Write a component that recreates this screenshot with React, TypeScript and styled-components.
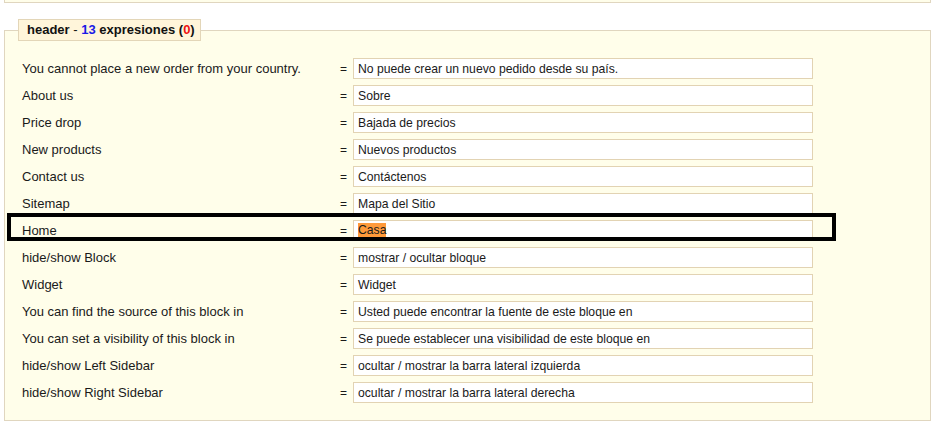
import React from 'react';
import styled, { createGlobalStyle } from 'styled-components';

const GlobalStyle = createGlobalStyle`
  html, body {
    margin: 0;
    padding: 0;
    background: #ffffff;
  }
  body {
    font-family: "Liberation Sans", Arial, sans-serif;
    font-size: 12px;
    color: #1a1a1a;
  }
`;

const Page = styled.div`
  width: 927px;
  padding: 0 0 0 4px;
`;

const TopPanel = styled.div`
  height: 2px;
  background: #fffeea;
  border: 1px solid #e0d6bf;
  border-top: none;
`;

const Group = styled.fieldset`
  position: relative;
  margin: 16px 0 0 0;
  padding: 14px 0 14px 17px;
  background: #fffeea;
  border: 1px solid #e0d6bf;
  min-width: 0;
`;

const Legend = styled.legend`
  margin-left: -4px;
  padding: 4px 5px 4px 8px;
  background: #fff5da;
  border: 1px solid #e3d6b8;
  font-weight: bold;
  font-size: 13px;
  line-height: 12px;
  color: #111;
`;

const Dash = styled.span`
  font-weight: normal;
`;

const Count = styled.span<{ $tone: 'blue' | 'red' }>`
  color: ${(p) => (p.$tone === 'blue' ? '#1a1ae6' : '#ee1111')};
`;

const Row = styled.div`
  display: grid;
  grid-template-columns: 318px 13px 460px;
  align-items: center;
  height: 27px;
`;

const Label = styled.span`
  white-space: nowrap;
  font-size: 13px;
`;

const Equals = styled.span`
  font-size: 12px;
`;

const Field = styled.div`
  box-sizing: border-box;
  height: 21px;
  padding: 0 4px;
  display: flex;
  align-items: center;
  background: #ffffff;
  border: 1px solid #e2d3b3;
  font-size: 12.2px;
  white-space: nowrap;
  overflow: hidden;
`;

const Marked = styled.span`
  background: #ff9a3a;
  line-height: 15px;
`;

const Highlight = styled.div`
  position: absolute;
  left: 2px;
  top: 172px;
  width: 821px;
  height: 20px;
  border: 4px solid #000;
  pointer-events: none;
`;

const rows: [string, string, boolean?][] = [
  ['You cannot place a new order from your country.', 'No puede crear un nuevo pedido desde su país.'],
  ['About us', 'Sobre'],
  ['Price drop', 'Bajada de precios'],
  ['New products', 'Nuevos productos'],
  ['Contact us', 'Contáctenos'],
  ['Sitemap', 'Mapa del Sitio'],
  ['Home', 'Casa', true],
  ['hide/show Block', 'mostrar / ocultar bloque'],
  ['Widget', 'Widget'],
  ['You can find the source of this block in', 'Usted puede encontrar la fuente de este bloque en'],
  ['You can set a visibility of this block in', 'Se puede establecer una visibilidad de este bloque en'],
  ['hide/show Left Sidebar', 'ocultar / mostrar la barra lateral izquierda'],
  ['hide/show Right Sidebar', 'ocultar / mostrar la barra lateral derecha'],
];

export default function App() {
  return (
    <Page>
      <GlobalStyle />
      <TopPanel />
      <Group>
        <Legend>
          header <Dash>-</Dash> <Count $tone="blue">13</Count> expresiones (<Count $tone="red">0</Count>)
        </Legend>
        {rows.map(([en, es, marked]) => (
          <Row key={en}>
            <Label>{en}</Label>
            <Equals>=</Equals>
            <Field>{marked ? <Marked>{es}</Marked> : es}</Field>
          </Row>
        ))}
        <Highlight />
      </Group>
    </Page>
  );
}
